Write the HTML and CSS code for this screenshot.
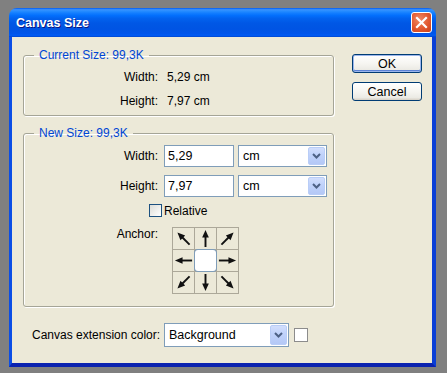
FILE: index.html
```html
<!DOCTYPE html>
<html>
<head>
<meta charset="utf-8">
<title>Canvas Size</title>
<link rel="stylesheet" href="styles.css">
</head>
<body>
<div class="window">
  <div class="titlebar">
    <span class="title">Canvas Size</span>
    <div class="close">
      <svg width="21" height="21" viewBox="0 0 21 21"><path d="M6 6 L15 15 M15 6 L6 15" stroke="#fff" stroke-width="2.2" stroke-linecap="square"/></svg>
    </div>
  </div>
  <div class="client">
    <div class="top">
      <div class="groups">
        <fieldset class="group current">
          <legend>Current Size: 99,3K</legend>
          <div class="info">
            <span class="lbl">Width:</span><span class="val">5,29 cm</span>
            <span class="lbl">Height:</span><span class="val">7,97 cm</span>
          </div>
        </fieldset>
        <fieldset class="group new">
          <legend>New Size: 99,3K</legend>
          <div class="row">
            <span class="lbl">Width:</span>
            <input class="num" type="text" value="5,29">
            <div class="combo units"><span class="combo-text">cm</span><span class="drop"><svg width="9" height="6" viewBox="0 0 9 6"><path d="M1 1 L4.5 4.5 L8 1" fill="none" stroke="#4d6185" stroke-width="2"/></svg></span></div>
          </div>
          <div class="row second">
            <span class="lbl">Height:</span>
            <input class="num" type="text" value="7,97">
            <div class="combo units"><span class="combo-text">cm</span><span class="drop"><svg width="9" height="6" viewBox="0 0 9 6"><path d="M1 1 L4.5 4.5 L8 1" fill="none" stroke="#4d6185" stroke-width="2"/></svg></span></div>
          </div>
          <div class="check-row"><span class="checkbox"></span><span>Relative</span></div>
          <div class="anchor-row">
            <span class="lbl">Anchor:</span>
            <div class="anchor">
              <span class="cell nw"><svg class="arrow" viewBox="0 0 22 22"><path d="M2 11 H14" stroke="#111" stroke-width="2"/><path d="M12 7.5 L20 11 L12 14.5 Z" fill="#111"/></svg></span>
              <span class="cell n"><svg class="arrow" viewBox="0 0 22 22"><path d="M2 11 H14" stroke="#111" stroke-width="2"/><path d="M12 7.5 L20 11 L12 14.5 Z" fill="#111"/></svg></span>
              <span class="cell ne"><svg class="arrow" viewBox="0 0 22 22"><path d="M2 11 H14" stroke="#111" stroke-width="2"/><path d="M12 7.5 L20 11 L12 14.5 Z" fill="#111"/></svg></span>
              <span class="cell w"><svg class="arrow" viewBox="0 0 22 22"><path d="M2 11 H14" stroke="#111" stroke-width="2"/><path d="M12 7.5 L20 11 L12 14.5 Z" fill="#111"/></svg></span>
              <span class="cell center"></span>
              <span class="cell e"><svg class="arrow" viewBox="0 0 22 22"><path d="M2 11 H14" stroke="#111" stroke-width="2"/><path d="M12 7.5 L20 11 L12 14.5 Z" fill="#111"/></svg></span>
              <span class="cell sw"><svg class="arrow" viewBox="0 0 22 22"><path d="M2 11 H14" stroke="#111" stroke-width="2"/><path d="M12 7.5 L20 11 L12 14.5 Z" fill="#111"/></svg></span>
              <span class="cell s"><svg class="arrow" viewBox="0 0 22 22"><path d="M2 11 H14" stroke="#111" stroke-width="2"/><path d="M12 7.5 L20 11 L12 14.5 Z" fill="#111"/></svg></span>
              <span class="cell se"><svg class="arrow" viewBox="0 0 22 22"><path d="M2 11 H14" stroke="#111" stroke-width="2"/><path d="M12 7.5 L20 11 L12 14.5 Z" fill="#111"/></svg></span>
            </div>
          </div>
        </fieldset>
      </div>
      <div class="buttons">
        <button class="btn default">OK</button>
        <button class="btn">Cancel</button>
      </div>
    </div>
    <div class="ext-row">
      <span class="ext-lbl">Canvas extension color:</span>
      <div class="combo ext"><span class="combo-text">Background</span><span class="drop"><svg width="9" height="6" viewBox="0 0 9 6"><path d="M1 1 L4.5 4.5 L8 1" fill="none" stroke="#4d6185" stroke-width="2"/></svg></span></div>
      <span class="swatch"></span>
    </div>
  </div>
</div>
</body>
</html>
```
FILE: styles.css
```css
* { box-sizing: border-box; }
html, body { margin: 0; }
body {
  background: #808080;
  padding: 8px 0 0 9px;
  height: 373px;
  overflow: hidden;
  font-family: "Liberation Sans", Arial, sans-serif;
  font-size: 12px;
  color: #000;
}
.window {
  width: 427px;
  display: flex;
  flex-direction: column;
}
.titlebar {
  height: 29px;
  border-radius: 8px 8px 0 0;
  background: linear-gradient(to bottom, #0058ee 0%, #3a93ff 6%, #288eff 10%, #127dff 18%, #036ffc 26%, #0262ee 36%, #0057e5 52%, #0054e3 72%, #0055eb 88%, #005bf5 94%, #0046cf 100%);
  display: flex;
  align-items: center;
  justify-content: space-between;
  padding: 0 4px 0 7px;
}
.title {
  color: #fff;
  font-weight: bold;
  font-size: 12.5px;
  text-shadow: 1px 1px 0 #0a1883;
  padding-top: 1px;
}
.close {
  width: 21px;
  height: 21px;
  border: 1px solid #fff;
  border-radius: 3px;
  background: radial-gradient(circle at 40% 35%, #f08a66 0%, #e2582f 55%, #c8401c 100%);
  display: flex;
}
.close svg { margin: -1px; }
.client {
  background: #ece9d8;
  border-left: 3px solid #0b4ee6;
  border-right: 4px solid #0a3fd6;
  border-bottom: 4px solid #0a22b0;
  height: 330px;
}
.top {
  display: flex;
  padding: 0 10px 0 11px;
}
.groups {
  width: 311px;
  display: flex;
  flex-direction: column;
}
.group {
  margin: 0;
  padding: 0;
  border: 1px solid #a5a597;
  border-radius: 3px;
  box-shadow: inset 1px 1px 0 #fff, 1px 1px 0 #fff;
  min-width: 0;
}
.group legend {
  color: #0046d5;
  line-height: 14px;
  padding: 0 5px;
  margin-left: 10px;
}
.current { margin-top: 11px; padding: 3px 0 2px 0; }
.new { margin-top: 10px; padding: 5px 0 12px 0; }
.info {
  display: grid;
  grid-template-columns: 134px auto;
  column-gap: 9px;
  grid-auto-rows: 24px;
  align-items: center;
}
.lbl { text-align: right; }
.row {
  display: grid;
  grid-template-columns: 134px 70px 89px;
  column-gap: 6px;
  align-items: center;
  height: 22px;
}
.row .combo { margin-left: -2px; width: 89px; }
.row.second { margin-top: 8px; }
.num {
  width: 70px;
  height: 22px;
  border: 1px solid #7f9db9;
  background: #fff;
  font-family: "Liberation Sans", Arial, sans-serif;
  font-size: 12.5px;
  padding: 0 3px;
  margin: 0;
  outline: none;
}
.combo {
  height: 22px;
  border: 1px solid #7f9db9;
  background: #fff;
  display: flex;
  align-items: center;
  justify-content: space-between;
  padding: 1px 1px 1px 4px;
}
.combo-text { font-size: 12.5px; }
.drop {
  width: 17px;
  height: 100%;
  background: linear-gradient(to bottom, #d2defc 0%, #c1d3fb 40%, #b4c8f6 100%);
  border: 1px solid #b9cdf7;
  border-radius: 2px;
  display: flex;
  align-items: center;
  justify-content: center;
}
.check-row {
  margin-top: 7px;
  height: 13px;
  display: flex;
  align-items: center;
  padding-left: 125px;
  gap: 2px;
}
.checkbox {
  width: 13px;
  height: 13px;
  border: 1px solid #1c5180;
  background: linear-gradient(135deg, #dcdcd7 0%, #f2f2ef 60%, #fff 100%);
}
.anchor-row {
  margin-top: 10px;
  display: flex;
  align-items: flex-start;
}
.anchor-row .lbl {
  width: 134px;
  line-height: 14px;
}
.anchor {
  margin-left: 14px;
  display: grid;
  grid-template-columns: repeat(3, 21px);
  grid-template-rows: repeat(3, 21px);
  gap: 1px;
  padding: 1px;
  background: #aca899;
}
.cell {
  background: #ece9d8;
  display: flex;
}
.cell.center {
  background: #fff;
  border-radius: 3px;
  box-shadow: 0 0 0 1px #7f9db9;
}
.arrow { width: 21px; height: 21px; }
.e .arrow { transform: rotate(0deg); }
.ne .arrow { transform: rotate(-45deg); }
.n .arrow { transform: rotate(-90deg); }
.nw .arrow { transform: rotate(-135deg); }
.w .arrow { transform: rotate(180deg); }
.sw .arrow { transform: rotate(135deg); }
.s .arrow { transform: rotate(90deg); }
.se .arrow { transform: rotate(45deg); }
.buttons {
  margin-left: auto;
  width: 70px;
  margin-top: 17px;
  display: flex;
  flex-direction: column;
  gap: 9px;
}
.btn {
  width: 70px;
  height: 19px;
  border: 1px solid #003c74;
  border-radius: 3px;
  background: linear-gradient(to bottom, #ffffff 0%, #f6f5f1 50%, #ecebe5 85%, #d6d0c5 100%);
  font-family: "Liberation Sans", Arial, sans-serif;
  font-size: 12.5px;
  color: #000;
  padding: 0;
  margin: 0;
}
.btn.default {
  box-shadow: inset 0 0 0 1px #9cb6ec, inset 0 -1px 0 1px #5d83d6;
}
.ext-row {
  margin-top: 16px;
  display: flex;
  align-items: center;
  padding-left: 20px;
}
.ext-lbl { width: 132px; }
.combo.ext {
  width: 125px;
  height: 24px;
}
.swatch {
  margin-left: 5px;
  width: 14px;
  height: 14px;
  border: 1px solid #8c8c8c;
  background: #fff;
}
```
